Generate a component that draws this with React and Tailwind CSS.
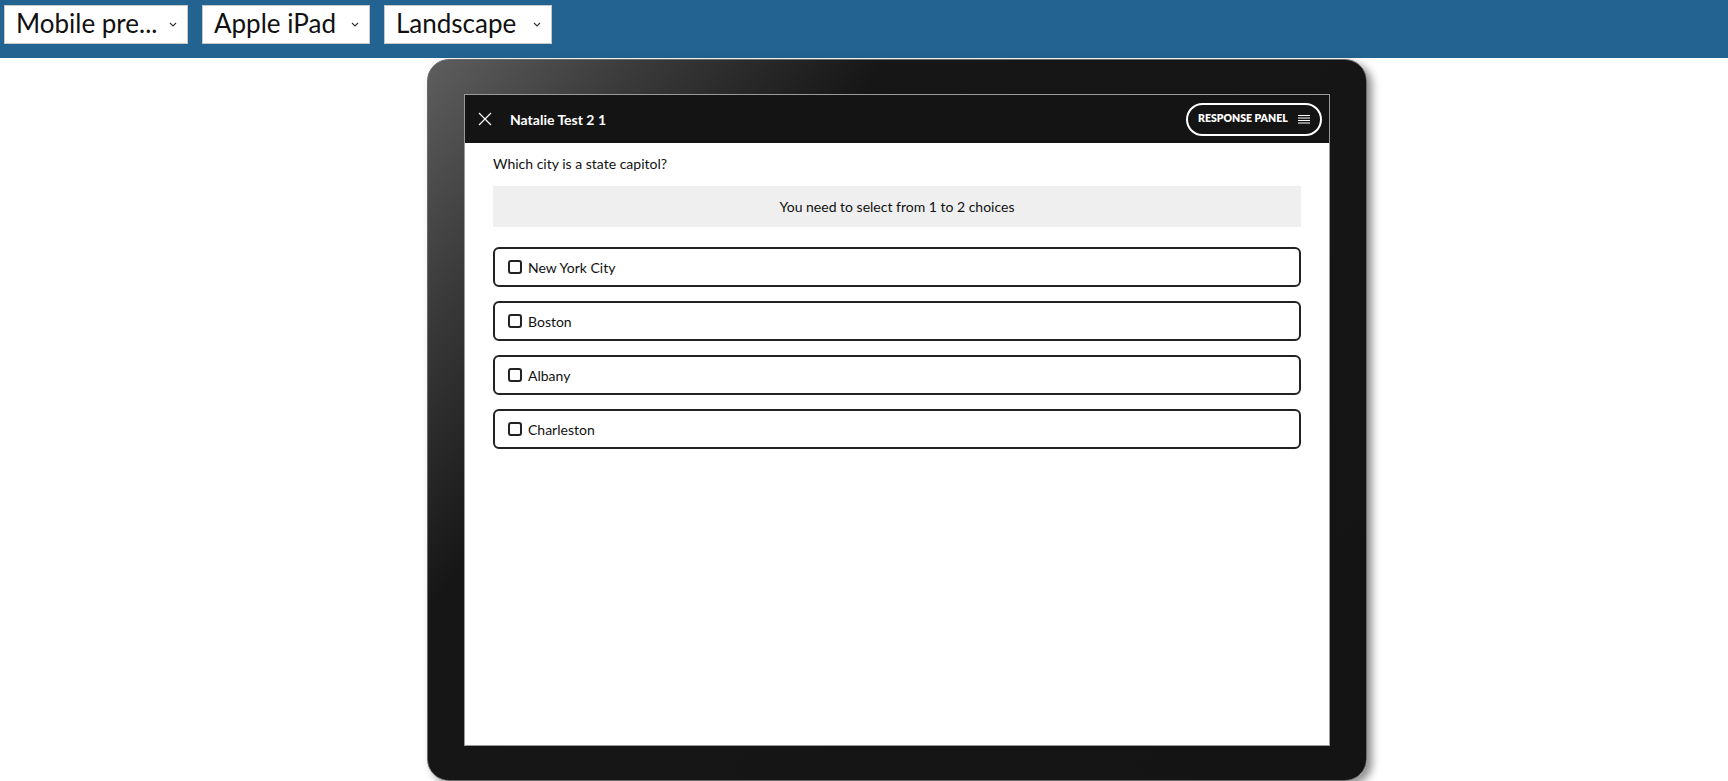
import React from 'react';

const font = "font-['Lato','Noto_Sans',sans-serif]";

const Chevron = () => (
  <svg width="8" height="5" viewBox="0 0 8 5" fill="none" stroke="#333" strokeWidth="1.1">
    <path d="M1 1l3 3 3-3" />
  </svg>
);

const Picker = ({ label, width }) => (
  <div className={`flex h-[39px] items-center justify-between bg-white border border-[#c8c8c8] pl-[11px] pr-[10px] ${width}`}>
    <span className="pb-[3px] text-[26px] leading-none text-[#111]">{label}</span>
    <Chevron />
  </div>
);

const CloseIcon = () => (
  <svg width="14" height="14" viewBox="0 0 14 14" stroke="#fff" strokeWidth="1.2" fill="none">
    <path d="M1 1l12 12M13 1L1 13" />
  </svg>
);

const MenuIcon = () => (
  <svg width="12" height="10" viewBox="0 0 12 10" stroke="#fff" strokeWidth="1" fill="none">
    <path d="M0 1.5h12M0 4h12M0 6.5h12M0 9h12" />
  </svg>
);

const choices = ['New York City', 'Boston', 'Albany', 'Charleston'];

export default function App() {
  return (
    <div className={`min-h-screen bg-white ${font}`}>
      {/* preview toolbar */}
      <div className="flex h-[58px] items-start gap-[14px] bg-[#236391] px-[4px] pt-[5px]">
        <Picker label="Mobile pre..." width="w-[184px]" />
        <Picker label="Apple iPad" width="w-[168px]" />
        <Picker label="Landscape" width="w-[168px]" />
      </div>

      {/* tablet body */}
      <div className="ml-[427px] mt-[1px] flex h-[722px] w-[940px] rounded-[22px] border border-[#6a6a6a] bg-[linear-gradient(130deg,#5e5e5e_0%,#3a3a3a_14%,#161616_30%,#141414_100%)] px-[36px] pt-[34px] pb-[34px] shadow-[5px_4px_8px_rgba(0,0,0,0.45)]">
        <div className="flex flex-1 flex-col border border-[#9a9a9a] bg-white">
          <div className="flex h-[48px] items-center justify-between bg-[#141414] pl-[13px] pr-[7px]">
            <div className="flex items-center gap-[18px]">
              <CloseIcon />
              <span className="text-[14px] font-bold text-white">Natalie Test 2 1</span>
            </div>
            <button className="flex h-[33px] w-[136px] items-center justify-between rounded-full border-2 border-white pl-[10px] pr-[10px]">
              <span className="text-[10.5px] font-extrabold text-white">RESPONSE PANEL</span>
              <MenuIcon />
            </button>
          </div>

          <div className="px-[28px] pt-[11px]">
            <p className="text-[14px] leading-[20px] text-[#111]">Which city is a state capitol?</p>
            <div className="mt-[12px] flex h-[41px] items-center justify-center bg-[#efefef] text-[14px] text-[#111]">
              You need to select from 1 to 2 choices
            </div>
            <div className="mt-[20px] flex flex-col gap-[14px]">
              {choices.map((c) => (
                <label key={c} className="flex h-[40px] items-center gap-[6px] rounded-[6px] border-2 border-[#222] pl-[13px]">
                  <span className="h-[14px] w-[14px] rounded-[3px] border-2 border-[#222]" />
                  <span className="text-[14px] text-[#111]">{c}</span>
                </label>
              ))}
            </div>
          </div>
        </div>
      </div>
    </div>
  );
}
